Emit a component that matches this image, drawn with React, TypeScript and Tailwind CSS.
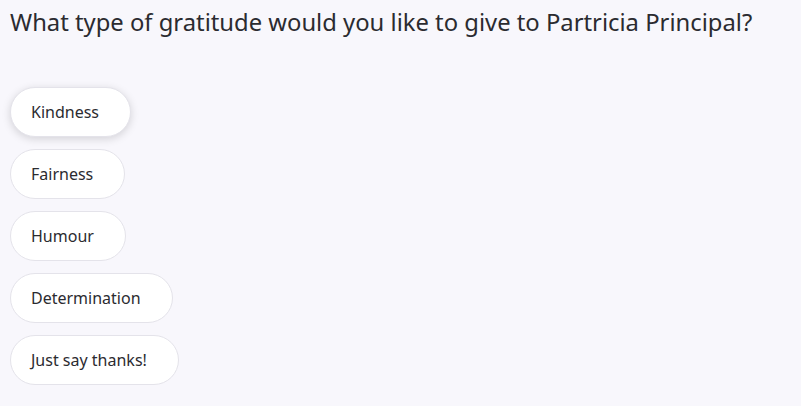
const options = ["Kindness", "Fairness", "Humour", "Determination", "Just say thanks!"]

export default function App() {
    return (
        <div className="min-h-[406px] bg-[#f8f7fc] px-[10px] pt-[5px] text-[#2b2b30]" style={{ fontFamily: '"Noto Sans", sans-serif' }}>
            <h1 className="text-[23.8px] leading-[34px] font-normal">What type of gratitude would you like to give to Partricia Principal?</h1>
            <div className="mt-[48px] flex flex-col items-start gap-[12px]">
                {options.map((opt, idx) => (
                    <button
                        key={opt}
                        className={
                            "h-[50px] rounded-full border border-[#e4e3ea] bg-white pl-[20px] pr-[31px] text-[16px] text-[#2b2b30] " +
                            (idx === 0 ? "shadow-[0_2px_8px_rgba(0,0,0,0.15)]" : "")
                        }
                    >
                        {opt}
                    </button>
                ))}
            </div>
        </div>
    )
}
